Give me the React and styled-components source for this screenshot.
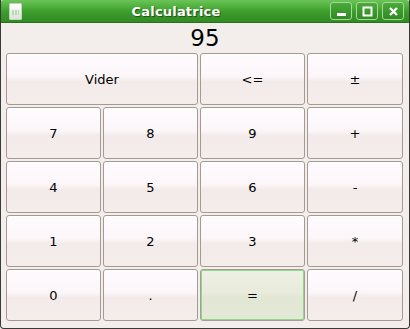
import styled, { createGlobalStyle } from 'styled-components';

const Global = createGlobalStyle`
  html, body { margin: 0; padding: 0; background: #f3eeec; }
  body { font-family: "DejaVu Sans", sans-serif; }
`

const Window = styled.div`
  width: 410px;
  height: 329px;
  box-sizing: border-box;
  display: flex;
  flex-direction: column;
  background: #f3eeec;
  border: 1px solid #3a3a36;
  border-top: none;
  border-radius: 0 0 4px 4px;
  overflow: hidden;
`

const TitleBar = styled.div`
  height: 22px;
  display: flex;
  align-items: center;
  padding: 0 6px 0 9px;
  margin: 0 -1px;
  background: linear-gradient(to bottom, #6cc45a 0%, #4fb03c 30%, #3c9c2c 55%, #318c24 100%);
  border-bottom: 1px solid #2a6e20;
  border-radius: 4px 4px 0 0;
`

const AppIcon = styled.div`
  width: 11px;
  height: 15px;
  margin-top: 1px;
  background: linear-gradient(to bottom, #ffffff, #d8e4d6);
  border: 1px solid #c8d2c4;
  border-radius: 1px;
  position: relative;
  &:after {
    content: '';
    position: absolute;
    left: 2px;
    right: 2px;
    top: 6px;
    height: 5px;
    background: repeating-linear-gradient(to right, #b8d8b0 0 2px, transparent 2px 3px);
  }
`

const Title = styled.div`
  flex: 1;
  text-align: center;
  color: #ffffff;
  font-weight: bold;
  font-size: 13px;
  letter-spacing: 0.2px;
  text-shadow: 1px 1px 1px #1f4d16;
`

const WinButtons = styled.div`
  display: flex;
  gap: 4px;
`

const WinButton = styled.div`
  width: 22px;
  height: 18px;
  box-sizing: border-box;
  border: 1px solid #a6d89a;
  border-radius: 3px;
  background: linear-gradient(to bottom, #4caa3a, #2f8a22);
  display: flex;
  align-items: center;
  justify-content: center;
  color: #fff;
`

const Display = styled.div`
  height: 30px;
  display: flex;
  align-items: center;
  justify-content: center;
  font-size: 23px;
  color: #000;
`

const Keypad = styled.div`
  display: grid;
  grid-template-columns: 95px 95px 105px 96px;
  grid-auto-rows: 52px;
  gap: 2px;
  padding: 0 0 0 5px;
`

const Key = styled.button`
  grid-column: span ${p => p.$span || 1};
  font-family: "DejaVu Sans", sans-serif;
  font-size: 13px;
  color: #000;
  border: 1px solid ${p => (p.$default ? '#a0a096' : '#a39a94')};
  border-radius: 3px;
  padding: 0;
  background: ${p => p.$default
    ? 'linear-gradient(to bottom, #edf0e3 0%, #e9ecdc 45%, #e2e6d4 55%, #e4e8d6 100%)'
    : 'linear-gradient(to bottom, #fefbfe 0%, #fcf6f9 45%, #f3ebea 55%, #f4edea 100%)'};
  box-shadow: ${p => (p.$default ? 'inset 0 0 0 1px #8fd88a' : 'inset 0 1px 0 #ffffff')};
`

const keys = [
  { label: 'Vider', span: 2 }, { label: '<=' }, { label: '±' },
  { label: '7' }, { label: '8' }, { label: '9' }, { label: '+' },
  { label: '4' }, { label: '5' }, { label: '6' }, { label: '-' },
  { label: '1' }, { label: '2' }, { label: '3' }, { label: '*' },
  { label: '0' }, { label: '.' }, { label: '=', def: true }, { label: '/' },
]

function App() {
  return (
    <Window>
      <Global />
      <TitleBar>
        <AppIcon />
        <Title>Calculatrice</Title>
        <WinButtons>
          <WinButton>
            <svg width="11" height="11" viewBox="0 0 11 11"><rect x="1" y="7" width="9" height="3" fill="#fff" /></svg>
          </WinButton>
          <WinButton>
            <svg width="11" height="11" viewBox="0 0 11 11"><rect x="1.5" y="1.5" width="8" height="8" fill="none" stroke="#fff" strokeWidth="2" /></svg>
          </WinButton>
          <WinButton>
            <svg width="11" height="11" viewBox="0 0 11 11"><path d="M2 2 L9 9 M9 2 L2 9" stroke="#fff" strokeWidth="2.4" /></svg>
          </WinButton>
        </WinButtons>
      </TitleBar>
      <Display>95</Display>
      <Keypad>
        {keys.map(k => (
          <Key key={k.label} $span={k.span} $default={k.def}>{k.label}</Key>
        ))}
      </Keypad>
    </Window>
  );
}

export default App;
